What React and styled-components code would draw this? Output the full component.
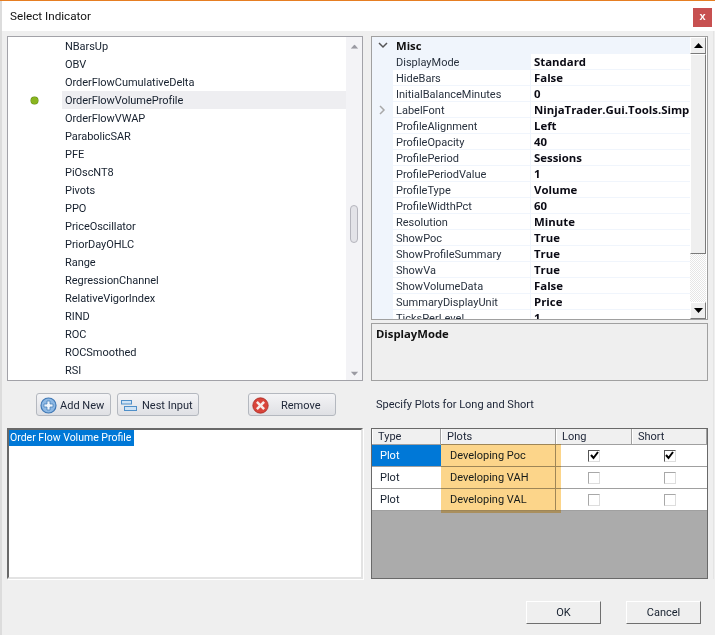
import React from "react";
import styled, { createGlobalStyle } from "styled-components";

const indicators = [
	"NBarsUp", "OBV", "OrderFlowCumulativeDelta", "OrderFlowVolumeProfile", "OrderFlowVWAP",
	"ParabolicSAR", "PFE", "PiOscNT8", "Pivots", "PPO", "PriceOscillator", "PriorDayOHLC",
	"Range", "RegressionChannel", "RelativeVigorIndex", "RIND", "ROC", "ROCSmoothed", "RSI",
];

const properties = [
	["DisplayMode", "Standard"], ["HideBars", "False"], ["InitialBalanceMinutes", "0"],
	["LabelFont", "NinjaTrader.Gui.Tools.Simp"], ["ProfileAlignment", "Left"],
	["ProfileOpacity", "40"], ["ProfilePeriod", "Sessions"], ["ProfilePeriodValue", "1"],
	["ProfileType", "Volume"], ["ProfileWidthPct", "60"], ["Resolution", "Minute"],
	["ShowPoc", "True"], ["ShowProfileSummary", "True"], ["ShowVa", "True"],
	["ShowVolumeData", "False"], ["SummaryDisplayUnit", "Price"], ["TicksPerLevel", "1"],
];

const plots = [
	{ name: "Developing Poc", checked: true },
	{ name: "Developing VAH", checked: false },
	{ name: "Developing VAL", checked: false },
];

function Triangle({ down, color }) {
	return (
		<svg width="9" height="5" viewBox="0 0 9 5">
			<path d={down ? "M0 0H9L4.5 5Z" : "M0 5H9L4.5 0Z"} fill={color} />
		</svg>
	);
}

function AddIcon() {
	return (
		<svg width="17" height="17" viewBox="0 0 17 17">
			<circle cx="8.5" cy="8.5" r="7.5" fill="#8db8e4" stroke="#3f78b5" strokeWidth="1.2" />
			<path d="M7 4h3v3h3v3h-3v3H7v-3H4V7h3z" fill="#eef5fc" stroke="#3f78b5" strokeWidth=".7" />
		</svg>
	);
}

function NestIcon() {
	return (
		<svg width="16" height="11" viewBox="0 0 16 11">
			<rect x=".5" y=".5" width="10" height="3.5" fill="#cfe3f5" stroke="#4f8fc8" />
			<rect x="3.5" y="6.5" width="12" height="4" fill="#cfe3f5" stroke="#4f8fc8" />
		</svg>
	);
}

function RemoveIcon() {
	return (
		<svg width="17" height="17" viewBox="0 0 17 17">
			<circle cx="8.5" cy="8.5" r="7.7" fill="#d9453b" stroke="#a82a22" strokeWidth=".8" />
			<path d="M5.8 4L8.5 6.7 11.2 4 13 5.8 10.3 8.5 13 11.2 11.2 13 8.5 10.3 5.8 13 4 11.2 6.7 8.5 4 5.8z" fill="#f6ecea" />
		</svg>
	);
}

function CheckMark() {
	return (
		<svg width="9" height="9" viewBox="0 0 9 9">
			<path d="M1 4l2.5 3L8 1" fill="none" stroke="#000" strokeWidth="2" />
		</svg>
	);
}

export default function App() {
	return (
		<>
			<Global />
			<Window>
				<TitleBar>
					<Title>Select Indicator</Title>
					<CloseButton>x</CloseButton>
				</TitleBar>
				<Body>
					<ListPanel>
						<ListColumn>
							{indicators.map((name) => (
								<ListRow key={name}>
									<DotSlot>{name === "OrderFlowVolumeProfile" && <Dot />}</DotSlot>
									<ListName $selected={name === "OrderFlowVolumeProfile"}>{name}</ListName>
								</ListRow>
							))}
						</ListColumn>
						<ListScroll>
							<Triangle color="#9a9aa2" />
							<ListThumb />
							<Triangle down color="#9a9aa2" />
						</ListScroll>
					</ListPanel>

					<RightTop>
						<PropertyGrid>
							<GridColumn>
								<MiscHeader>
									<Gutter>
										<svg width="10" height="7" viewBox="0 0 10 7">
											<path d="M1 1l4 4 4-4" fill="none" stroke="#555" strokeWidth="1.5" />
										</svg>
									</Gutter>
									<MiscLabel>Misc</MiscLabel>
								</MiscHeader>
								{properties.map(([name, value], i) => (
									<PropRow key={name}>
										<Gutter>
											{name === "LabelFont" && (
												<svg width="7" height="10" viewBox="0 0 7 10">
													<path d="M1 1l4 4-4 4" fill="none" stroke="#a8a8a8" strokeWidth="1.5" />
												</svg>
											)}
										</Gutter>
										<PropName $active={i === 0}>{name}</PropName>
										<PropValue>{value}</PropValue>
									</PropRow>
								))}
							</GridColumn>
							<GridScroll>
								<ArrowButton><Triangle color="#000" /></ArrowButton>
								<GridThumb />
								<Checker />
								<ArrowButton><Triangle down color="#000" /></ArrowButton>
							</GridScroll>
						</PropertyGrid>
						<HelpPanel>DisplayMode</HelpPanel>
					</RightTop>

					<ButtonBar>
						<ToolButton $w={75}><AddIcon />Add New</ToolButton>
						<ToolButton $w={82} $ml={6} $gap={5}><NestIcon />Nest Input</ToolButton>
						<ToolButton $w={88} $ml={49} $gap={12}><RemoveIcon />Remove</ToolButton>
					</ButtonBar>
					<SpecifyLabel>Specify Plots for Long and Short</SpecifyLabel>

					<NameBox>
						<NameSelected>Order Flow Volume Profile</NameSelected>
					</NameBox>

					<PlotTable>
						<HeadRow>
							<HeadCell>Type</HeadCell>
							<HeadCell>Plots</HeadCell>
							<HeadCell>Long</HeadCell>
							<HeadCell>Short</HeadCell>
						</HeadRow>
						{plots.map((plot, i) => (
							<PlotRow key={plot.name}>
								<TypeCell $selected={i === 0}>Plot</TypeCell>
								<PlotCell>{plot.name}</PlotCell>
								<CheckCell><CheckBox $on={plot.checked}>{plot.checked && <CheckMark />}</CheckBox></CheckCell>
								<CheckCell><CheckBox $on={plot.checked}>{plot.checked && <CheckMark />}</CheckBox></CheckCell>
							</PlotRow>
						))}
						<Highlight />
					</PlotTable>
				</Body>
				<Footer>
					<DialogButton>OK</DialogButton>
					<DialogButton>Cancel</DialogButton>
				</Footer>
			</Window>
		</>
	);
}

const Global = createGlobalStyle`
	html, body {
		margin: 0;
		padding: 0;
		background: #efefef;
	}
	* {
		box-sizing: border-box;
	}
`;

const Window = styled.div`
	width: 715px;
	height: 635px;
	display: flex;
	flex-direction: column;
	overflow: hidden;
	background: #efefef;
	border-top: 1px solid #e67e22;
	font-family: Roboto, "Liberation Sans", sans-serif;
	font-size: 11px;
	color: #16202e;
`;

const TitleBar = styled.div`
	height: 30px;
	flex: none;
	display: flex;
	align-items: flex-start;
	justify-content: space-between;
	background: #fff;
	border-left: 2px solid #dcdcdc;
	padding: 7px 3px 0 8px;
`;

const Title = styled.div`
	font-size: 11.7px;
	line-height: 16px;
	color: #111;
`;

const CloseButton = styled.div`
	width: 19px;
	height: 19px;
	background: #c75050;
	color: #fff;
	font-family: "Liberation Sans", sans-serif;
	font-size: 11px;
	font-weight: 700;
	line-height: 16px;
	text-align: center;
`;

const Body = styled.div`
	flex: none;
	display: grid;
	grid-template-columns: 356px 337px;
	grid-template-rows: 345px 47px 151px;
	column-gap: 8px;
	padding: 5px 0 0 5px;
	border-left: 2px solid #dcdcdc;
	width: 714px;
	border-right: 1px solid #e4e4e4;
`;

const ListPanel = styled.div`
	display: flex;
	height: 345px;
	overflow: hidden;
	background: #fff;
	border: 1px solid #a2a2a8;
`;

const ListColumn = styled.div`
	flex: 1;
`;

const ListRow = styled.div`
	height: 18px;
	display: flex;
	align-items: center;
`;

const DotSlot = styled.div`
	width: 54px;
	display: flex;
	justify-content: center;
	padding-right: 1px;
`;

const Dot = styled.span`
	width: 7px;
	height: 7px;
	border-radius: 50%;
	background: #8ab51f;
	box-shadow: 0 0 0 0.5px #5f8a12;
`;

const ListName = styled.div`
	flex: 1;
	height: 18px;
	line-height: 19px;
	padding-left: 3px;
	letter-spacing: -0.05px;
	background: ${(p) => (p.$selected ? "#eeeef1" : "transparent")};
`;

const ListScroll = styled.div`
	width: 16px;
	flex: none;
	background: #f3f3f6;
	display: flex;
	flex-direction: column;
	align-items: center;
	padding: 7px 0 4px;
	position: relative;

	svg {
		flex: none;
		transform: scale(0.85);
	}
	svg:last-child {
		margin-top: auto;
	}
`;

const ListThumb = styled.div`
	position: absolute;
	top: 168px;
	left: 4px;
	width: 8px;
	height: 38px;
	border: 1px solid #b5b5bd;
	border-radius: 4px;
	background: #e3e3e8;
`;

const RightTop = styled.div`
	display: flex;
	flex-direction: column;
	gap: 3px;
`;

const PropertyGrid = styled.div`
	height: 284px;
	display: flex;
	background: #fff;
	border: 1px solid #a0a0a0;
	overflow: hidden;
`;

const GridColumn = styled.div`
	width: 318px;
	overflow: hidden;
`;

const MiscHeader = styled.div`
	height: 17px;
	display: flex;
	align-items: center;
	background: #f0f5fc;
`;

const Gutter = styled.div`
	width: 21px;
	height: 100%;
	flex: none;
	display: flex;
	align-items: center;
	justify-content: center;
	background: #f0f5fc;
`;

const MiscLabel = styled.div`
	font-family: "Open Sans", sans-serif;
	font-size: 11.3px;
	font-weight: 700;
	padding-left: 3px;
	color: #111;
`;

const PropRow = styled.div`
	height: 16px;
	display: flex;
	border-bottom: 1px solid #f0f5fc;
	white-space: nowrap;
	line-height: 17px;
`;

const PropName = styled.div`
	width: 138px;
	flex: none;
	padding-left: 3px;
	border-right: 1px solid #f0f5fc;
	background: ${(p) => (p.$active ? "#f0f5fc" : "#fff")};
	color: #29323f;
`;

const PropValue = styled.div`
	flex: 1;
	overflow: hidden;
	padding-left: 3px;
	font-family: "Open Sans", sans-serif;
	font-size: 11.4px;
	font-weight: 700;
	line-height: 15px;
	color: #0a0a14;
`;

const GridScroll = styled.div`
	width: 16px;
	flex: none;
	display: flex;
	flex-direction: column;
`;

const ArrowButton = styled.div`
	height: 17px;
	flex: none;
	display: flex;
	align-items: center;
	justify-content: center;
	background: #efefef;
	border: 1px solid;
	border-color: #fff #7a7a7a #7a7a7a #fff;
`;

const GridThumb = styled(ArrowButton)`
	height: 200px;
`;

const Checker = styled.div`
	flex: 1;
	background: repeating-conic-gradient(#fff 0 25%, #e6e6e6 0 50%) 0 0 / 2px 2px;
`;

const HelpPanel = styled.div`
	height: 58px;
	border: 1px solid #a0a0a0;
	padding: 2px 4px;
	font-family: "Open Sans", sans-serif;
	font-size: 11.3px;
	font-weight: 700;
	color: #111;
	background: #efefef;
`;

const ButtonBar = styled.div`
	display: flex;
	align-items: flex-start;
	padding: 12px 0 0 29px;
`;

const ToolButton = styled.div`
	width: ${(p) => p.$w}px;
	height: 23px;
	margin-left: ${(p) => p.$ml || 0}px;
	display: flex;
	align-items: center;
	gap: ${(p) => p.$gap || 3}px;
	padding: 1px 0 0 3px;
	border: 1px solid #b4b8bf;
	border-radius: 3px;
	background: linear-gradient(#f4f4f6, #dfe0e4);
	color: #20283a;
	white-space: nowrap;
`;

const SpecifyLabel = styled.div`
	padding: 16px 0 0 5px;
	line-height: 16px;
	color: #20283a;
`;

const NameBox = styled.div`
	background: #fff;
	border: 2px solid;
	border-color: #696969 #e3e3e3 #e3e3e3 #696969;
	box-shadow: 1px 1px 0 #fff;
	height: 151px;
	width: 356px;
`;

const NameSelected = styled.span`
	display: inline-block;
	height: 16px;
	line-height: 15px;
	padding: 0 3px 0 1px;
	font-size: 10.5px;
	background: #0078d7;
	color: #fff;
	vertical-align: top;
`;

const PlotTable = styled.div`
	position: relative;
	height: 151px;
	width: 337px;
	background: #ababab;
	border: 1px solid #696969;
`;

const HeadRow = styled.div`
	display: grid;
	grid-template-columns: 69px 115px 76px 75px;
	height: 16px;
	background: #f0f0f0;
	border-bottom: 1px solid #a0a0a0;
`;

const HeadCell = styled.div`
	padding-left: 5px;
	line-height: 15px;
	border-right: 1px solid #a0a0a0;
	border-left: 1px solid #fff;
	color: #20283a;
`;

const PlotRow = styled.div`
	display: grid;
	grid-template-columns: 69px 115px 76px 75px;
	height: 22px;
	background: #fff;
	border-bottom: 1px solid #a0a0a0;
`;

const TypeCell = styled.div`
	padding-left: 8px;
	line-height: 21px;
	background: ${(p) => (p.$selected ? "#0078d7" : "#fff")};
	color: ${(p) => (p.$selected ? "#fff" : "#16202e")};
`;

const PlotCell = styled.div`
	padding-left: 9px;
	line-height: 21px;
	border-right: 1px solid #a0a0a0;
`;

const CheckCell = styled.div`
	display: flex;
	align-items: center;
	justify-content: center;
`;

const CheckBox = styled.div`
	width: 12px;
	height: 12px;
	display: flex;
	align-items: center;
	justify-content: center;
	background: #fff;
	border: 1px solid ${(p) => (p.$on ? "#555" : "#a8a8a8")};
	border-right-color: #ddd;
	border-bottom-color: #ddd;
`;

const Highlight = styled.div`
	position: absolute;
	left: 69px;
	top: 15px;
	width: 120px;
	height: 69px;
	background: #fcd58a;
	mix-blend-mode: multiply;
`;

const Footer = styled.div`
	flex: 1;
	display: flex;
	justify-content: flex-end;
	align-items: flex-start;
	gap: 25px;
	padding: 22px 14px 0 0;
	border-left: 2px solid #dcdcdc;
`;

const DialogButton = styled.div`
	width: 75px;
	height: 23px;
	text-align: center;
	line-height: 21px;
	background: #efefef;
	border: 1px solid;
	border-color: #fff #6f6f6f #6f6f6f #fff;
	color: #16202e;
`;
